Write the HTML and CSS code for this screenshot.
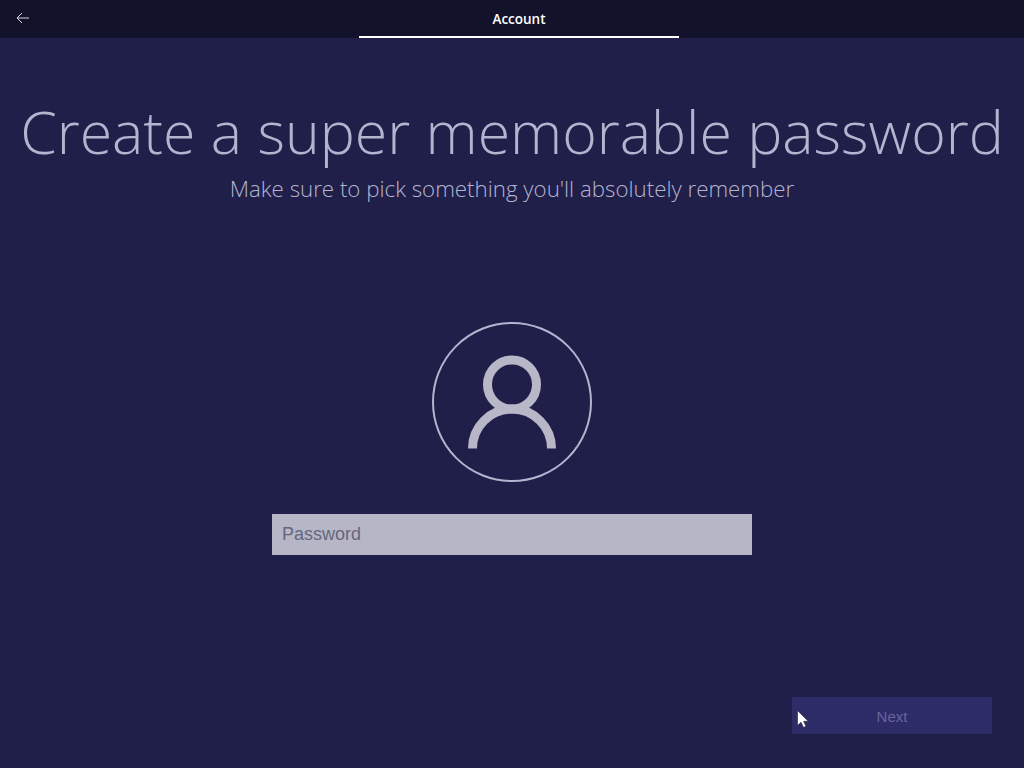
FILE: index.html
```html
<!DOCTYPE html>
<html lang="en">
<head>
    <meta charset="UTF-8">
    <title>Account</title>
    <link rel="stylesheet" href="styles.css">
</head>
<body>

    <!-- Top bar -->
    <div class="topbar">
        <div class="back">
            <svg width="14" height="12" viewBox="0 0 14 12" fill="none" stroke="#d8d8e6" stroke-width="1">
                <path d="M13 6H1M6 1L1 6l5 5"/>
            </svg>
        </div>
        <div class="tab">Account</div>
    </div>

    <div class="main">
        <h1 class="title">Create a super memorable password</h1>
        <p class="subtitle">Make sure to pick something you'll absolutely remember</p>

        <!-- User picture -->
        <div class="avatar">
            <svg width="88" height="94" viewBox="0 0 88 94" fill="none" stroke="#b7b7c7" stroke-width="9">
                <circle cx="44" cy="29.500" r="24.500"/>
                <path d="M4.500 93.500A39.500 39.500 0 0 1 83.500 93.500"/>
            </svg>
        </div>

        <input class="password" type="password" placeholder="Password">

        <div class="actions">
            <button class="next" disabled>Next</button>
        </div>
    </div>

    <!-- Mouse pointer -->
    <svg class="cursor" width="12" height="18" viewBox="0 0 12 18">
        <path d="M0.500 0.500V15.500L4 12.200L6.500 17.500L9 16.300L6.600 11.300H11.200Z" fill="#fff" stroke="#222" stroke-width="0.600"/>
    </svg>

</body>
</html>
```

FILE: styles.css
```css
html, body {
    height: 100%;
}
body {
    margin: 0;
    background-color: #1f1f4a;
    color: #b4b4d0;
    font-family: "Open Sans", sans-serif;
    overflow: hidden;
    position: relative;
}
.topbar {
    height: 38px;
    background-color: #12122a;
    position: relative;
    display: flex;
    justify-content: center;
}
.back {
    position: absolute;
    left: 16px;
    top: 12px;
    line-height: 0;
}
.tab {
    width: 320px;
    height: 36px;
    margin-left: 14px;
    border-bottom: 2px solid #fff;
    color: #fff;
    font-size: 13.500px;
    font-weight: 600;
    line-height: 38px;
    text-align: center;
}
.main {
    display: flex;
    flex-direction: column;
    align-items: center;
}
.title {
    margin: 53px 0 0;
    font-size: 59px;
    font-weight: 300;
    line-height: 81px;
    white-space: nowrap;
}
.subtitle {
    margin: 1px 0 0;
    font-size: 22.300px;
    font-weight: 300;
    line-height: 32px;
}
.avatar {
    width: 156px;
    height: 156px;
    margin-top: 117px;
    border: 2px solid #b4b4d0;
    border-radius: 50%;
    display: flex;
    justify-content: center;
    align-items: flex-end;
}
.avatar svg {
    margin-bottom: 31px;
}
.password {
    width: 480px;
    height: 41px;
    margin-top: 32px;
    padding: 0 10px;
    box-sizing: border-box;
    border: none;
    border-radius: 0;
    background-color: #b6b6c6;
    font-family: "Liberation Sans", Arial, sans-serif;
    font-size: 18px;
}
.password::placeholder {
    color: #66667c;
    opacity: 1;
}
.actions {
    width: 100%;
    display: flex;
    justify-content: flex-end;
    padding-right: 32px;
    box-sizing: border-box;
    margin-top: 142px;
}
.next {
    width: 200px;
    height: 37px;
    padding-top: 3px;
    border: none;
    background-color: #2e2b69;
    color: #66649a;
    font-family: "Liberation Sans", Arial, sans-serif;
    font-size: 15px;
}
.cursor {
    position: absolute;
    left: 796.500px;
    top: 710px;
}
```
